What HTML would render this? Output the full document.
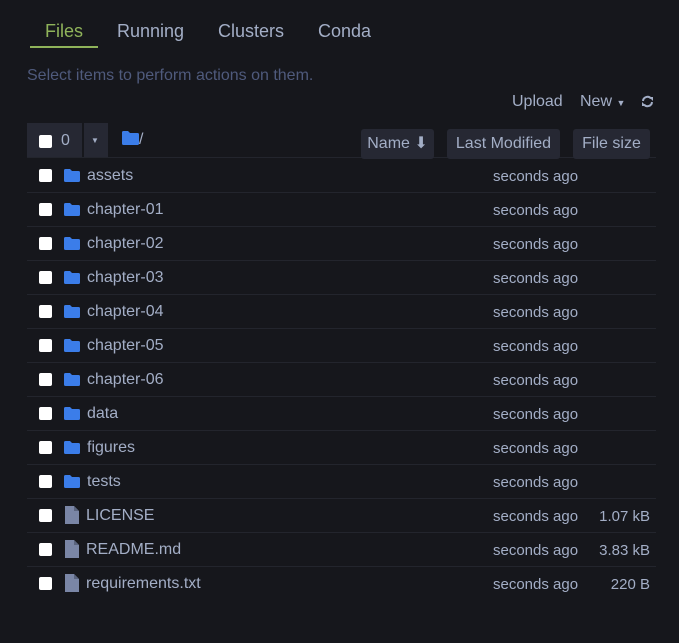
<!DOCTYPE html>
<html><head><style>
body{margin:0;width:679px;height:643px;background:#16171c;font-family:"Liberation Sans",sans-serif;color:#a3aec6;position:relative;overflow:hidden}
.a{position:absolute;white-space:nowrap}
.cb{position:absolute;width:13px;height:13px;background:#fff;border-radius:2px}
.btn{position:absolute;background:#262833;border-radius:3px;font-size:16px;line-height:30px;text-align:center;color:#a3aec6}
.row{position:absolute;left:27px;width:629px;height:34px;border-bottom:1px solid #23252d}
</style></head><body>
<div class="a" style="left:45px;top:21px;font-size:18px;color:#8fb35a">Files</div>
<div class="a" style="left:30px;top:46px;width:68px;height:2px;background:#8fb35a"></div>
<div class="a" style="left:117px;top:21px;font-size:18px">Running</div>
<div class="a" style="left:218px;top:21px;font-size:18px">Clusters</div>
<div class="a" style="left:318px;top:21px;font-size:18px">Conda</div>
<div class="a" style="left:27px;top:67px;font-size:16px;color:#4f5a7c">Select items to perform actions on them.</div>
<div class="a" style="left:512px;top:93px;font-size:16px">Upload</div>
<div class="a" style="left:580px;top:93px;font-size:16px">New <span style="font-size:9px">▼</span></div>
<svg class="a" style="left:641px;top:95px" width="13" height="13" viewBox="0 0 13 13"><path d="M2 6a4.5 4.5 0 0 1 8-2.5M11 7a4.5 4.5 0 0 1-8 2.5" stroke="#a3aec6" stroke-width="2" fill="none"/><path d="M8 2h4v4zM5 11H1V7z" fill="#a3aec6"/></svg>
<div class="a" style="left:27px;top:123px;width:55px;height:34px;background:#262833"></div>
<div class="a" style="left:84px;top:123px;width:24px;height:34px;background:#262833"></div>
<div class="cb" style="left:39px;top:135px"></div>
<div class="a" style="left:61px;top:132px;font-size:16px">0</div>
<div class="a" style="left:91px;top:136px;font-size:8px">▼</div>
<svg class="a" style="left:122px;top:131px" width="17" height="14" viewBox="0 0 17 14"><path d="M0 1.5Q0 0 1.5 0H6l2 2h7.5Q17 2 17 3.5V12.5Q17 14 15.5 14H1.5Q0 14 0 12.5Z" fill="#3b7de9"/></svg>
<div class="a" style="left:139px;top:131px;font-size:16px">/</div>
<div class="a" style="left:27px;top:157px;width:629px;height:1px;background:#23252d"></div>
<div class="btn" style="left:361px;top:129px;width:73px">Name ⬇</div>
<div class="btn" style="left:447px;top:129px;width:113px">Last Modified</div>
<div class="btn" style="left:573px;top:129px;width:77px">File size</div>
<div id="rows"></div>
<script>
var r=[["assets",0],["chapter-01",0],["chapter-02",0],["chapter-03",0],["chapter-04",0],["chapter-05",0],["chapter-06",0],["data",0],["figures",0],["tests",0],["LICENSE","1.07 kB"],["README.md","3.83 kB"],["requirements.txt","220 B"]];
var h="";r.forEach(function(x,i){var y=158+i*34;
if(i<12)h+='<div class="row" style="top:'+y+'px"></div>';
h+='<div class="cb" style="left:39px;top:'+(y+11)+'px"></div>';
if(!x[1])h+='<svg class="a" style="left:64px;top:'+(y+11)+'px" width="16" height="13" viewBox="0 0 16 13"><path d="M0 1.5Q0 0 1.5 0H6l2 2h6.5Q16 2 16 3.5V11.5Q16 13 14.5 13H1.5Q0 13 0 11.5Z" fill="#3b7de9"/></svg>';
else h+='<svg class="a" style="left:65px;top:'+(y+8)+'px" width="14" height="18" viewBox="0 0 14 18"><path d="M0 0H9L14 5V18H0Z" fill="#7a86a6"/><path d="M9 0V5H14" fill="#5a647e"/></svg>';
h+='<div class="a" style="left:'+(x[1]?86:87)+'px;top:'+(y+9)+'px;font-size:16px">'+x[0]+'</div>';
h+='<div class="a" style="left:493px;top:'+(y+10)+'px;font-size:15px">seconds ago</div>';
if(x[1])h+='<div class="a" style="right:29px;top:'+(y+10)+'px;font-size:15px">'+x[1]+'</div>';});
document.getElementById("rows").innerHTML=h;
</script>
</body></html>
